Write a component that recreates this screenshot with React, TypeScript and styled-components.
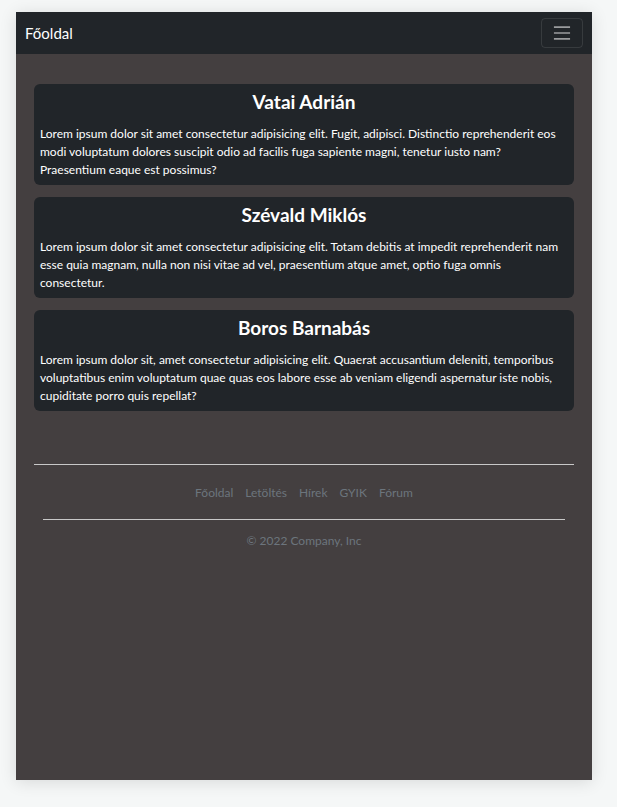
import React from "react";
import styled, { createGlobalStyle } from "styled-components";

const Global = createGlobalStyle`
  html, body { margin: 0; padding: 0; background: #f5f7f7; }
  body { font-family: "Lato", "Open Sans", sans-serif; font-size: 12px; }
  * { box-sizing: border-box; }
`;

const Page = styled.div`
  padding: 12px 25px 27px 16px;
`;

const Frame = styled.div`
  width: 576px;
  height: 768px;
  background: #443f40;
  box-shadow: 0 2px 16px rgba(0, 0, 0, 0.12);
  display: flex;
  flex-direction: column;
`;

const Navbar = styled.nav`
  height: 42px;
  background: #212529;
  display: flex;
  align-items: center;
  justify-content: space-between;
  padding: 0 9px 0 9px;
`;

const Brand = styled.a`
  color: #fff;
  font-size: 15px;
  text-decoration: none;
`;

const Toggler = styled.button`
  width: 42px;
  height: 30px;
  background: transparent;
  border: 1px solid rgba(255, 255, 255, 0.1);
  border-radius: 4px;
  display: flex;
  align-items: center;
  justify-content: center;
  padding: 0;
`;

const Main = styled.main`
  padding: 30px 18px 0 18px;
  display: flex;
  flex-direction: column;
  gap: 12px;
`;

const Card = styled.section`
  background: #212529;
  border-radius: 6px;
  padding: 7px 6px 6px 6px;
  color: #fff;
`;

const Title = styled.h4`
  margin: 0 0 12px 0;
  text-align: center;
  font-size: 19px;
  font-weight: 700;
  line-height: 22px;
`;

const Text = styled.p`
  margin: 0;
  font-size: 12px;
  line-height: 18px;
`;

const Footer = styled.footer`
  margin: 53px 18px 0 18px;
`;

const Nav = styled.ul`
  list-style: none;
  margin: 0;
  padding: 19px 0 0 0;
  border-top: 1px solid #c8c8c8;
  display: flex;
  justify-content: center;
  gap: 0;
`;

const NavLink = styled.a`
  color: #6c757d;
  text-decoration: none;
  font-size: 12px;
  padding: 0 6px;
  line-height: 18px;
`;

const Rule = styled.hr`
  margin: 17px 9px 0 9px;
  border: none;
  border-top: 1px solid #c8c8c8;
`;

const Copy = styled.p`
  margin: 12px 0 0 0;
  text-align: center;
  color: #6c757d;
  font-size: 12px;
  line-height: 18px;
`;

const cards = [
  {
    name: "Vatai Adrián",
    text: "Lorem ipsum dolor sit amet consectetur adipisicing elit. Fugit, adipisci. Distinctio reprehenderit eos modi voluptatum dolores suscipit odio ad facilis fuga sapiente magni, tenetur iusto nam? Praesentium eaque est possimus?",
  },
  {
    name: "Szévald Miklós",
    text: "Lorem ipsum dolor sit amet consectetur adipisicing elit. Totam debitis at impedit reprehenderit nam esse quia magnam, nulla non nisi vitae ad vel, praesentium atque amet, optio fuga omnis consectetur.",
  },
  {
    name: "Boros Barnabás",
    text: "Lorem ipsum dolor sit, amet consectetur adipisicing elit. Quaerat accusantium deleniti, temporibus voluptatibus enim voluptatum quae quas eos labore esse ab veniam eligendi aspernatur iste nobis, cupiditate porro quis repellat?",
  },
];

const links = ["Főoldal", "Letöltés", "Hírek", "GYIK", "Fórum"];

export default function App() {
  return (
    <Page>
      <Global />
      <Frame>
        <Navbar>
          <Brand href="#">Főoldal</Brand>
          <Toggler aria-label="menu">
            <svg width="22" height="22" viewBox="0 0 30 30">
              <path
                d="M4 7h22M4 15h22M4 23h22"
                stroke="rgba(255,255,255,0.55)"
                strokeWidth="2.2"
                strokeLinecap="butt"
              />
            </svg>
          </Toggler>
        </Navbar>
        <Main>
          {cards.map((c) => (
            <Card key={c.name}>
              <Title>{c.name}</Title>
              <Text>{c.text}</Text>
            </Card>
          ))}
        </Main>
        <Footer>
          <Nav>
            {links.map((l) => (
              <li key={l}>
                <NavLink href="#">{l}</NavLink>
              </li>
            ))}
          </Nav>
          <Rule />
          <Copy>© 2022 Company, Inc</Copy>
        </Footer>
      </Frame>
    </Page>
  );
}
